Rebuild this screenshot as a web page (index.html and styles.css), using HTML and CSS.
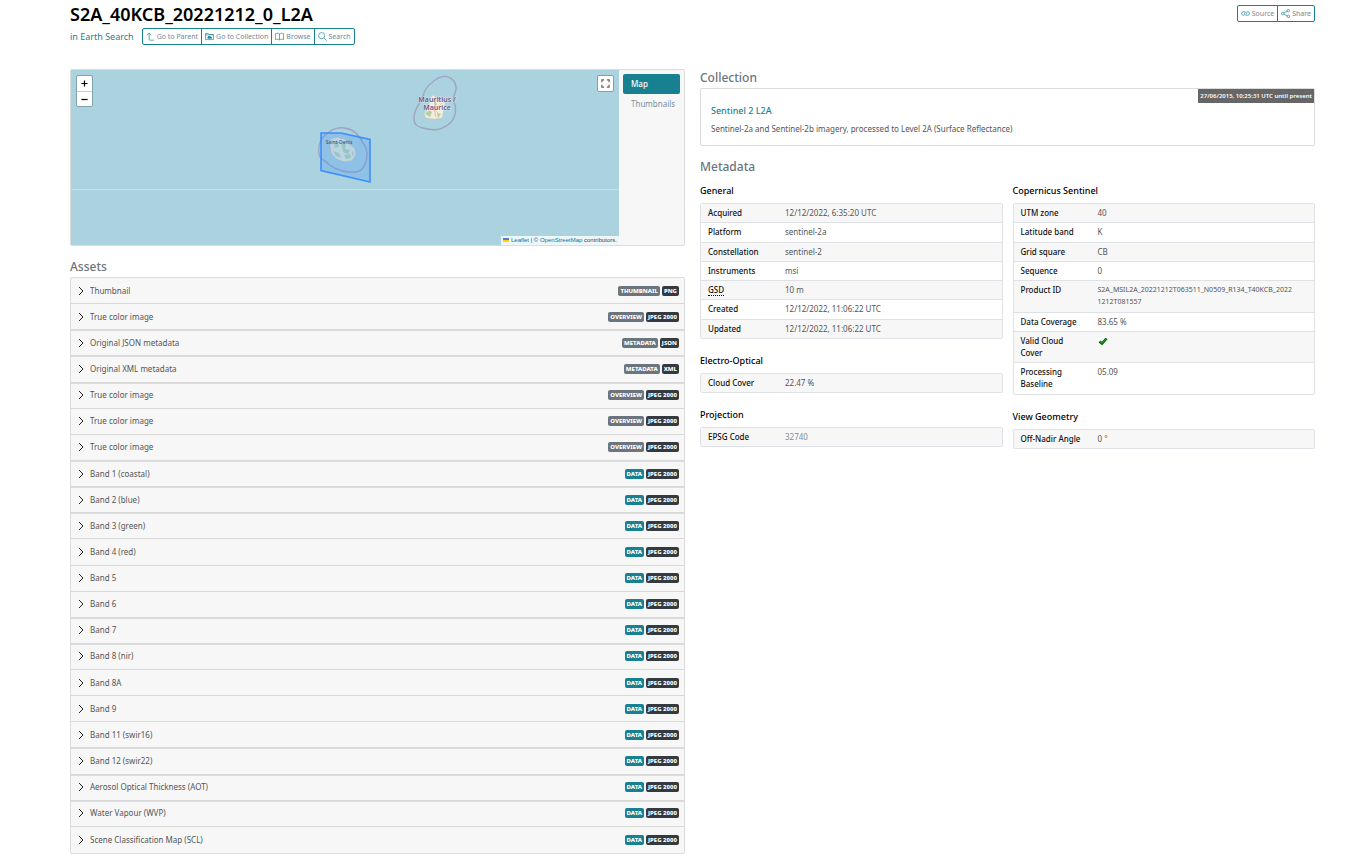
FILE: index.html
```html
<!DOCTYPE html>
<html lang="en">
<head>
<meta charset="utf-8">
<meta name="viewport" content="width=device-width, initial-scale=1">
<title>S2A_40KCB_20221212_0_L2A</title>
<link rel="stylesheet" href="styles.css">
</head>
<body>
<svg class="sprite" aria-hidden="true">
  <symbol id="chevron" viewBox="0 0 8 10"><path d="M2 1l4 4-4 4" fill="none" stroke="#222" stroke-width="1"/></symbol>
</svg>
<header class="header">
  <div>
    <h1 class="title">S2A_40KCB_20221212_0_L2A</h1>
    <div class="subline">
      <span class="parent">in <a href="#search">Earth Search</a></span>
      <div class="group">
        <button class="btn" type="button"><svg viewBox="0 0 16 16"><path d="M14.500 14.500H6.500a1 1 0 0 1-1-1V2M1.500 6l4-4 4 4"/></svg>Go to Parent</button>
        <button class="btn" type="button"><svg viewBox="0 0 16 16"><path d="M1 13.500v-11h5l2 2h7v9zM1 5h14"/><path class="solid" d="M5 11V9l2-2 2 2 1-1 2 3z"/></svg>Go to Collection</button>
        <button class="btn" type="button"><svg viewBox="0 0 16 16"><path d="M8 3.500C6 2 3 2 .700 3v10.500C3 12.500 6 12.500 8 14c2-1.500 5-1.500 7.300-.500V3C13 2 10 2 8 3.500zV14"/></svg>Browse</button>
        <button class="btn" type="button"><svg viewBox="0 0 16 16"><circle cx="6.500" cy="6.500" r="5.500"/><path d="M10.500 10.500l5 5"/></svg>Search</button>
      </div>
    </div>
  </div>
  <div class="group">
    <button class="btn" type="button"><svg viewBox="0 0 16 16"><path d="M6 11H4a3 3 0 0 1 0-6h3a3 3 0 0 1 2.500 4.500M10 5h2a3 3 0 0 1 0 6H9a3 3 0 0 1-2.500-4.500"/></svg>Source</button>
    <button class="btn" type="button"><svg viewBox="0 0 16 16"><path d="M5 7l6-3.500M5 9l6 3.500"/><circle cx="3" cy="8" r="2.200"/><circle cx="13" cy="3" r="2.200"/><circle cx="13" cy="13" r="2.200"/></svg>Share</button>
  </div>
</header>
<main class="columns">
  <div>
    <section class="viewer">
      <div class="map">
        <svg class="tiles" viewBox="0 0 548 175" preserveAspectRatio="xMidYMid slice" role="img" aria-label="Map of Réunion and Mauritius">
          <rect width="548" height="175" fill="#aad3df"/>
          <path d="M0 119.500h548" stroke="#c3e0e8"/>
          <g fill="none" stroke="#9c93b8" stroke-width="1.400" stroke-opacity=".75">
            <path d="M248 84C247 76 249 70 253 66C260 60 265 57 273 58C282 59 288 64 292 73C297 79 297 88 294 94C292 101 286 103 278 102C267 101 259 96 254 91C250 89 248 87 248 84Z"/>
            <path d="M343 49C342 39 350 33 352 26C354 17 361 12 367 8C375 4 384 8 385 17C386 22 381 26 383 32C387 42 383 53 373 57C367 61 359 60 352 58C346 57 343 54 343 49Z"/>
          </g>
          <path d="M259 69l7-2 8 2 4 5 6 4 1 7-4 6-8 1-8-3-5-6-1-7z" fill="#e8edda" stroke="#c9b6ba" stroke-width=".6"/>
          <path d="M262 71l5 1 1 5-4 1zM270 71l5 3-1 5 5 1-2 4-5-2zM262 81l6 2 2 5-5-2zM273 85l6-1 1 4-5 1zM281 80l2 4-2 2z" fill="#b9d8b5"/>
          <path d="M359 29l3-4 5 4 7 4-1 6-2 9-8 1-8-1-2-4 4-5z" fill="#f2eedc" stroke="#d9c4ba" stroke-width=".5"/>
          <path d="M354 44l4-4 3 2-2 5zM363 31l3 3-2 4zM366 43l4 1-3 4z" fill="#b5d0a0"/>
          <path d="M358 35l5 4 2 8M371 33l-7 7 5 5M365 26l-1 13" stroke="#e9b49d" fill="none" stroke-width=".8"/>
          <g class="place"><text x="366" y="32">Mauritius /</text><text x="366" y="40">Maurice</text></g>
          <text class="city" x="268" y="74">Saint-Denis</text>
          <path d="M250 63H270l29 6.500V112L250 100.500Z" fill="#3388ff" fill-opacity=".24" stroke="#3388ff" stroke-opacity=".9" stroke-width="1.600"/>
        </svg>
        <div class="zoom"><button type="button" aria-label="Zoom in"><svg viewBox="0 0 8 8"><path d="M4 .5v7M.5 4h7"/></svg></button><button type="button" aria-label="Zoom out"><svg viewBox="0 0 8 8"><path d="M.5 4h7"/></svg></button></div>
        <button class="full" type="button" aria-label="View fullscreen"><svg viewBox="0 0 10 10"><path d="M1 3.500V1h2.500M6.500 1H9v2.500M9 6.500V9H6.500M3.500 9H1V6.500"/></svg></button>
        <div class="credit"><svg viewBox="0 0 6 4"><path fill="#4c7be1" d="M0 0h6v2H0z"/><path fill="#ffd500" d="M0 2h6v2H0z"/></svg><a href="#leaflet">Leaflet</a> | © <a href="#osm">OpenStreetMap</a> contributors.</div>
      </div>
      <nav class="tabs"><a class="tab active" href="#map">Map</a><a class="tab" href="#thumbnails">Thumbnails</a></nav>
    </section>
    <section>
      <h2 class="heading assets-heading">Assets</h2>
      <div class="assets">
        <button class="asset" type="button"><svg><use href="#chevron"/></svg><span class="name">Thumbnail</span><span class="badge">THUMBNAIL</span><span class="badge dark">PNG</span></button>
        <button class="asset thick" type="button"><svg><use href="#chevron"/></svg><span class="name">True color image</span><span class="badge">OVERVIEW</span><span class="badge dark">JPEG 2000</span></button>
        <button class="asset thick" type="button"><svg><use href="#chevron"/></svg><span class="name">Original JSON metadata</span><span class="badge">METADATA</span><span class="badge dark">JSON</span></button>
        <button class="asset thick" type="button"><svg><use href="#chevron"/></svg><span class="name">Original XML metadata</span><span class="badge">METADATA</span><span class="badge dark">XML</span></button>
        <button class="asset" type="button"><svg><use href="#chevron"/></svg><span class="name">True color image</span><span class="badge">OVERVIEW</span><span class="badge dark">JPEG 2000</span></button>
        <button class="asset" type="button"><svg><use href="#chevron"/></svg><span class="name">True color image</span><span class="badge">OVERVIEW</span><span class="badge dark">JPEG 2000</span></button>
        <button class="asset thick" type="button"><svg><use href="#chevron"/></svg><span class="name">True color image</span><span class="badge">OVERVIEW</span><span class="badge dark">JPEG 2000</span></button>
        <button class="asset thick" type="button"><svg><use href="#chevron"/></svg><span class="name">Band 1 (coastal)</span><span class="badge data">DATA</span><span class="badge dark">JPEG 2000</span></button>
        <button class="asset thick" type="button"><svg><use href="#chevron"/></svg><span class="name">Band 2 (blue)</span><span class="badge data">DATA</span><span class="badge dark">JPEG 2000</span></button>
        <button class="asset" type="button"><svg><use href="#chevron"/></svg><span class="name">Band 3 (green)</span><span class="badge data">DATA</span><span class="badge dark">JPEG 2000</span></button>
        <button class="asset" type="button"><svg><use href="#chevron"/></svg><span class="name">Band 4 (red)</span><span class="badge data">DATA</span><span class="badge dark">JPEG 2000</span></button>
        <button class="asset" type="button"><svg><use href="#chevron"/></svg><span class="name">Band 5</span><span class="badge data">DATA</span><span class="badge dark">JPEG 2000</span></button>
        <button class="asset thick" type="button"><svg><use href="#chevron"/></svg><span class="name">Band 6</span><span class="badge data">DATA</span><span class="badge dark">JPEG 2000</span></button>
        <button class="asset thick" type="button"><svg><use href="#chevron"/></svg><span class="name">Band 7</span><span class="badge data">DATA</span><span class="badge dark">JPEG 2000</span></button>
        <button class="asset" type="button"><svg><use href="#chevron"/></svg><span class="name">Band 8 (nir)</span><span class="badge data">DATA</span><span class="badge dark">JPEG 2000</span></button>
        <button class="asset" type="button"><svg><use href="#chevron"/></svg><span class="name">Band 8A</span><span class="badge data">DATA</span><span class="badge dark">JPEG 2000</span></button>
        <button class="asset" type="button"><svg><use href="#chevron"/></svg><span class="name">Band 9</span><span class="badge data">DATA</span><span class="badge dark">JPEG 2000</span></button>
        <button class="asset thick" type="button"><svg><use href="#chevron"/></svg><span class="name">Band 11 (swir16)</span><span class="badge data">DATA</span><span class="badge dark">JPEG 2000</span></button>
        <button class="asset thick" type="button"><svg><use href="#chevron"/></svg><span class="name">Band 12 (swir22)</span><span class="badge data">DATA</span><span class="badge dark">JPEG 2000</span></button>
        <button class="asset thick" type="button"><svg><use href="#chevron"/></svg><span class="name">Aerosol Optical Thickness (AOT)</span><span class="badge data">DATA</span><span class="badge dark">JPEG 2000</span></button>
        <button class="asset" type="button"><svg><use href="#chevron"/></svg><span class="name">Water Vapour (WVP)</span><span class="badge data">DATA</span><span class="badge dark">JPEG 2000</span></button>
        <button class="asset" type="button"><svg><use href="#chevron"/></svg><span class="name">Scene Classification Map (SCL)</span><span class="badge data">DATA</span><span class="badge dark">JPEG 2000</span></button>
      </div>
    </section>
  </div>
  <div>
    <section>
      <h2 class="heading">Collection</h2>
      <div class="card">
        <span class="period">27/06/2015, 10:25:31 UTC until present</span>
        <a class="card-title" href="#collection">Sentinel 2 L2A</a>
        <p class="card-text">Sentinel-2a and Sentinel-2b imagery, processed to Level 2A (Surface Reflectance)</p>
      </div>
    </section>
    <section>
      <h2 class="heading metadata-heading">Metadata</h2>
      <div class="metadata">
        <div>
          <h3 class="sub">General</h3>
          <table class="props general">
            <tr><th scope="row">Acquired</th><td>12/12/2022, 6:35:20 UTC</td></tr>
            <tr><th scope="row">Platform</th><td>sentinel-2a</td></tr>
            <tr><th scope="row">Constellation</th><td>sentinel-2</td></tr>
            <tr><th scope="row">Instruments</th><td>msi</td></tr>
            <tr><th scope="row"><abbr title="Ground Sample Distance">GSD</abbr></th><td>10 m</td></tr>
            <tr><th scope="row">Created</th><td>12/12/2022, 11:06:22 UTC</td></tr>
            <tr><th scope="row">Updated</th><td>12/12/2022, 11:06:22 UTC</td></tr>
          </table>
          <h3 class="sub">Electro-Optical</h3>
          <table class="props"><tr><th scope="row">Cloud Cover</th><td>22.47 %</td></tr></table>
          <h3 class="sub">Projection</h3>
          <table class="props"><tr><th scope="row">EPSG Code</th><td><a href="#epsg">32740</a></td></tr></table>
        </div>
        <div>
          <h3 class="sub">Copernicus Sentinel</h3>
          <table class="props copernicus">
            <tr><th scope="row">UTM zone</th><td>40</td></tr>
            <tr><th scope="row">Latitude band</th><td>K</td></tr>
            <tr><th scope="row">Grid square</th><td>CB</td></tr>
            <tr><th scope="row">Sequence</th><td>0</td></tr>
            <tr><th scope="row">Product ID</th><td class="identifier">S2A_MSIL2A_20221212T063511_N0509_R134_T40KCB_2022<wbr>1212T081557</td></tr>
            <tr><th scope="row">Data Coverage</th><td>83.65 %</td></tr>
            <tr><th scope="row">Valid Cloud Cover</th><td><svg class="check" viewBox="0 0 10 8" role="img" aria-label="Yes"><path d="M1.500 4.500L4 6.500 8.500 1.500" fill="none" stroke="#054d05" stroke-width="2.600"/><path d="M1.800 4.500L4 6.200 8.300 1.700" fill="none" stroke="#1b9a1b" stroke-width="1.200"/></svg></td></tr>
            <tr><th scope="row">Processing Baseline</th><td>05.09</td></tr>
          </table>
          <h3 class="sub">View Geometry</h3>
          <table class="props"><tr><th scope="row">Off-Nadir Angle</th><td>0 °</td></tr></table>
        </div>
      </div>
    </section>
  </div>
</main>
</body>
</html>
```
FILE: styles.css
```css
* { box-sizing: border-box; }
body {
  margin: 0;
  padding: 3px 43px 4px 70px;
  background: #fff;
  color: #555;
  font: 8px/12px "Noto Sans", "Open Sans", sans-serif;
}
h1, h2, h3, p { margin: 0; }
a { color: #188191; text-decoration: none; }
button { font: inherit; cursor: pointer; }
.sprite { position: absolute; width: 0; height: 0; }

.header { display: flex; justify-content: space-between; align-items: flex-start; margin-bottom: 24px; }
.title { color: #000; font-size: 18px; line-height: 22px; font-weight: 600; }
.subline { display: flex; align-items: center; gap: 8px; margin-top: 3px; }
.parent { font-size: 9px; color: #188191; }
.group { display: flex; }
.btn {
  display: flex; align-items: center; gap: 2px; height: 17px; padding: 0 3px;
  border: 1px solid #188191; background: #fff; color: #6f8a98; font-size: 7px; line-height: 10px;
}
.header > .group { margin-top: 2px; }
.btn + .btn { margin-left: -1px; }
.btn:first-child { border-radius: 2px 0 0 2px; }
.btn:last-child { border-radius: 0 2px 2px 0; }
.btn svg { width: 9px; height: 9px; fill: none; stroke: #188191; stroke-width: 1.2; }
.btn .solid { fill: #188191; }

.columns { display: grid; grid-template-columns: minmax(0, 1fr) minmax(0, 1fr); gap: 15px; }
.heading { padding-top: 1px; color: #6c757d; font-size: 12px; line-height: 16px; font-weight: 500; }

.viewer { display: flex; height: 177px; border: 1px solid #dcdcdc; border-radius: 2px; background: #f7f7f7; }
.map { position: relative; flex: 1; min-width: 0; background: #aad3df; }
.tiles { display: block; width: 100%; height: 100%; }
.place { font-size: 7px; font-weight: 600; text-anchor: middle; fill: #70567c; stroke: #fff; stroke-opacity: .5; stroke-width: 1; paint-order: stroke; }
.city { font-size: 5px; text-anchor: middle; fill: #333; }
.zoom { position: absolute; left: 5px; top: 5px; display: flex; flex-direction: column; border: 1px solid #7ea3ad; border-radius: 2px; background: #fff; }
.zoom button { display: grid; place-items: center; width: 15px; height: 15px; padding: 0; border: 0; background: none; }
.zoom button + button { border-top: 1px solid #ccc; }
.zoom svg { width: 7px; height: 7px; stroke: #000; stroke-width: 1.4; }
.full { position: absolute; right: 5px; top: 5px; display: grid; place-items: center; width: 17px; height: 17px; padding: 0; border: 1px solid #7ea3ad; border-radius: 2px; background: #fff; }
.full svg { width: 9px; height: 9px; fill: none; stroke: #666; stroke-width: 1.4; }
.credit { position: absolute; right: 0; bottom: 0; padding: 0 2px; background: rgba(255, 255, 255, .8); color: #444; font: 6px/9px "Liberation Sans", Arial, sans-serif; white-space: nowrap; }
.credit a { color: #0078a8; }
.credit svg { width: 6px; height: 4px; margin-right: 2px; }
.tabs { display: flex; flex-direction: column; padding: 4px; width: 65px; }
.tab { padding: 4px 8px; color: #7d8f99; }
.tab.active { border-radius: 2px; background: #188191; color: #fff; font-weight: 500; }

.assets-heading { margin: 12px 0 2px; }
.assets { display: grid; grid-auto-rows: 1fr; min-height: 577px; border: 1px solid #dcdcdc; border-radius: 2px; background: #f7f7f7; }
.asset { display: flex; align-items: center; gap: 2px; padding: 0 5px 0 6px; border: 0; border-bottom: 1px solid #d8d8d8; background: none; color: #555; text-align: left; }
.asset.thick { box-shadow: 0 1px #dcdcdc; }
.asset:last-child { border-bottom: 0; }
.asset svg { width: 8px; height: 10px; }
.name { flex: 1; padding-left: 3px; }
.badge { padding: 0 2px; border-radius: 2px; background: #6c757d; color: #fff; font-size: 6px; line-height: 10px; font-weight: 800; }
.badge.dark { background: #343a40; }
.badge.data { background: #188191; }

.card { position: relative; margin-top: 2px; padding: 16px 10px 10px; border: 1px solid #dcdcdc; border-radius: 2px; }
.card-title { display: block; font-size: 9px; font-weight: 500; }
.card-text { margin-top: 6px; }
.period { position: absolute; top: 0; right: 0; padding: 0 2px; background: #666; color: #fff; font-size: 6px; line-height: 14px; font-weight: 600; }
.metadata-heading { margin-top: 12px; }
.metadata { display: grid; grid-template-columns: minmax(0, 1fr) minmax(0, 1fr); gap: 10px; margin-top: 10px; }
.sub { margin-bottom: 6px; color: #000; font-size: 9px; line-height: 12px; font-weight: 500; }
.props { width: 100%; margin-bottom: 16px; border: 1px solid #dee2e6; border-radius: 2px; border-spacing: 0; table-layout: fixed; }
.props.general { height: 136px; }
.props.copernicus { height: 192px; }
.props tr:nth-child(odd) { background: #f7f7f7; }
.props th, .props td { padding: 3px 6px 3px 7px; text-align: left; vertical-align: top; font-weight: 400; overflow-wrap: anywhere; }
.props th { width: 77px; color: #111; font-weight: 500; }
.props .identifier { font-size: 7px; }
.props tr + tr > * { border-top: 1px solid #dee2e6; }
.props a { color: #7d8f99; }
abbr { text-decoration: none; border-bottom: 1px dotted #000; }
.check { display: block; width: 10px; height: 8px; margin-top: 2px; }
```
